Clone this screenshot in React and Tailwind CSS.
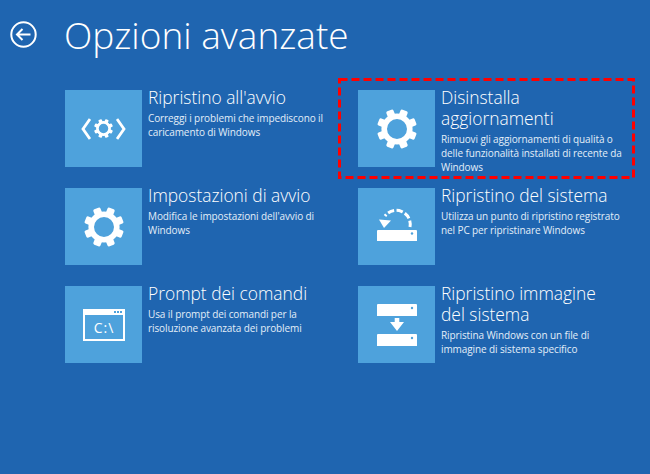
const FONT = "font-['Open_Sans','Noto_Sans',sans-serif]"

function Gear({ size, cx = 50, cy = 50 }) {
  // ring plus eight teeth, drawn on a 100 unit box
  const teeth = [0, 45, 90, 135, 180, 225, 270, 315]
  return (
    <svg width={size} height={size} viewBox="0 0 100 100" fill="none">
      <circle cx={cx} cy={cy} r="32" stroke="white" strokeWidth="14" />
      {teeth.map(a => (
        <rect key={a} x={cx - 9.5} y={cy - 50} width="19" height="20" rx="4" fill="white" transform={`rotate(${a + 22.5} ${cx} ${cy})`} />
      ))}
    </svg>
  )
}

function RepairIcon() {
  return (
    <div className="flex items-center gap-[3px]">
      <svg width="10" height="24" viewBox="0 0 10 24" fill="none">
        <path d="M9 2 L2 12 L9 22" stroke="white" strokeWidth="2.8" />
      </svg>
      <Gear size={19} />
      <svg width="10" height="24" viewBox="0 0 10 24" fill="none">
        <path d="M1 2 L8 12 L1 22" stroke="white" strokeWidth="2.8" />
      </svg>
    </div>
  )
}

function RestoreIcon() {
  return (
    <svg width="42" height="34" viewBox="0 0 42 34" fill="none" className="mb-[4px]">
      <path d="M34 19 A14 14 0 0 0 9 8" stroke="white" strokeWidth="3" strokeDasharray="6.5 2.4" />
      <path d="M3 11.5 L15 12.5 L8 20 Z" fill="white" />
      <path d="M2 22 L40 22 Q41 22 41 23 L41 33 L1 33 L1 23 Q1 22 2 22 Z" fill="white" />
      <circle cx="36" cy="25.5" r="1.2" fill="#4ea2dc" />
    </svg>
  )
}

function ImageIcon() {
  return (
    <svg width="42" height="44" viewBox="0 0 42 44" fill="none">
      <path d="M2 1 L40 1 Q41 1 41 2 L41 13 L1 13 L1 2 Q1 1 2 1 Z" fill="white" />
      <circle cx="36" cy="5" r="1.2" fill="#4ea2dc" />
      <path d="M18.7 15 L23.3 15 L23.3 19 L28 19 L21 28 L14 19 L18.7 19 Z" fill="white" />
      <path d="M2 31 L40 31 Q41 31 41 32 L41 43 L1 43 L1 32 Q1 31 2 31 Z" fill="white" />
      <circle cx="36" cy="35" r="1.2" fill="#4ea2dc" />
    </svg>
  )
}

function PromptIcon() {
  return (
    <svg width="42" height="32" viewBox="0 0 42 32" fill="none">
      <rect x="1" y="1" width="40" height="30" stroke="white" strokeWidth="2" />
      <rect x="1" y="1" width="40" height="5" fill="white" />
      <rect x="31" y="2" width="2" height="2" fill="#4ea2dc" />
      <rect x="34" y="2" width="2" height="2" fill="#4ea2dc" />
      <rect x="37" y="2" width="2" height="2" fill="#4ea2dc" />
      <text x="21" y="24" textAnchor="middle" fill="white" fontSize="14" fontFamily="Open Sans, sans-serif" letterSpacing="1">C:\</text>
    </svg>
  )
}

const options = [
  { title: "Ripristino all'avvio", text: 'Correggi i problemi che impediscono il caricamento di Windows', icon: <RepairIcon /> },
  { title: 'Disinstalla aggiornamenti', text: 'Rimuovi gli aggiornamenti di qualità o delle funzionalità installati di recente da Windows', icon: <Gear size={40} />, marked: true },
  { title: 'Impostazioni di avvio', text: "Modifica le impostazioni dell'avvio di Windows", icon: <Gear size={40} /> },
  { title: 'Ripristino del sistema', text: 'Utilizza un punto di ripristino registrato nel PC per ripristinare Windows', icon: <RestoreIcon /> },
  { title: 'Prompt dei comandi', text: 'Usa il prompt dei comandi per la risoluzione avanzata dei problemi', icon: <PromptIcon /> },
  { title: 'Ripristino immagine del sistema', text: 'Ripristina Windows con un file di immagine di sistema specifico', icon: <ImageIcon /> },
]

function Option({ option }) {
  return (
    <div className="relative flex h-[98px] gap-[6px]">
      <div className="flex h-[77px] w-[77px] shrink-0 items-center justify-center bg-[#4ea2dc]">{option.icon}</div>
      <div className="w-[190px] -mt-[3px] text-white">
        <h2 className="max-w-[175px] text-[17.4px] leading-[21px] font-light">{option.title}</h2>
        <p className="mt-[3px] text-[10px] leading-[14px] tracking-[-0.1px] text-[#e3eef8]">{option.text}</p>
      </div>
      {option.marked && (
        <svg width="297" height="101" fill="none" className="absolute -top-[12px] -left-[20px]">
          <rect x="1.5" y="1.5" width="294" height="98" stroke="#ff0000" strokeWidth="3" strokeDasharray="8 4" />
        </svg>
      )}
    </div>
  )
}

export default function App() {
  return (
    <div className={`h-[474px] w-[650px] overflow-hidden bg-[#1f65b0] ${FONT}`}>
      <header className="flex h-[90px] items-start pt-[11px] pl-[10px]">
        <svg width="27" height="27" viewBox="0 0 27 27" fill="none" className="mt-[10px]">
          <circle cx="13.5" cy="13.5" r="12.2" stroke="white" strokeWidth="2" />
          <path d="M7 13.5 L20.5 13.5 M12.5 8 L7 13.5 L12.5 19" stroke="white" strokeWidth="2" />
        </svg>
        <h1 className="ml-[27px] text-[37px] leading-[48px] font-light text-white">Opzioni avanzate</h1>
      </header>
      <main className="ml-[65px] grid w-[586px] grid-cols-2">
        {options.map(o => (
          <Option key={o.title} option={o} />
        ))}
      </main>
    </div>
  )
}
